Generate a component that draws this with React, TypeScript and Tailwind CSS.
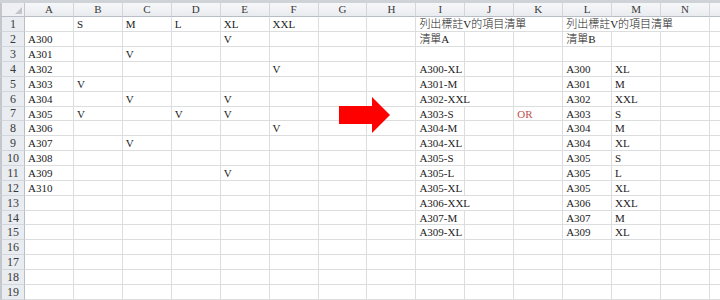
const COLS = ['A', 'B', 'C', 'D', 'E', 'F', 'G', 'H', 'I', 'J', 'K', 'L', 'M', 'N']
const COL_W = 48.93
const TITLE = '列出標註V的項目清單'

type Row = Record<string, string>

const rows: Row[] = [
  { B: 'S', C: 'M', D: 'L', E: 'XL', F: 'XXL', I: TITLE, L: TITLE },
  { A: 'A300', E: 'V', I: '清單A', L: '清單B' },
  { A: 'A301', C: 'V' },
  { A: 'A302', F: 'V', I: 'A300-XL', L: 'A300', M: 'XL' },
  { A: 'A303', B: 'V', I: 'A301-M', L: 'A301', M: 'M' },
  { A: 'A304', C: 'V', E: 'V', I: 'A302-XXL', L: 'A302', M: 'XXL' },
  { A: 'A305', B: 'V', D: 'V', E: 'V', I: 'A303-S', K: 'OR', L: 'A303', M: 'S' },
  { A: 'A306', F: 'V', I: 'A304-M', L: 'A304', M: 'M' },
  { A: 'A307', C: 'V', I: 'A304-XL', L: 'A304', M: 'XL' },
  { A: 'A308', I: 'A305-S', L: 'A305', M: 'S' },
  { A: 'A309', E: 'V', I: 'A305-L', L: 'A305', M: 'L' },
  { A: 'A310', I: 'A305-XL', L: 'A305', M: 'XL' },
  { I: 'A306-XXL', L: 'A306', M: 'XXL' },
  { I: 'A307-M', L: 'A307', M: 'M' },
  { I: 'A309-XL', L: 'A309', M: 'XL' },
  {},
  {},
  {},
  {},
]

const spanClass: Record<number, string> = { 1: '', 2: 'col-span-2', 3: 'col-span-3', 4: 'col-span-4' }

// rough width of the text, to let long values spill over empty neighbours like Excel does
function textWidth(s: string) {
  let w = 0
  for (const ch of s) w += /[\u3000-\u9fff]/.test(ch) ? 11 : 6
  return w
}

const font = { fontFamily: '"Liberation Serif", "Noto Sans CJK TC", serif' }

function DataRow({ row, n }: { row: Row; n: number }) {
  const cells = []
  let c = 0
  while (c < COLS.length) {
    const text = row[COLS[c]] ?? ''
    let span = 1
    if (text) {
      const w = textWidth(text) + 4
      while (w > span * COL_W && c + span < COLS.length && !row[COLS[c + span]]) span++
    }
    const cjk = /[\u3000-\u9fff]/.test(text)
    cells.push(
      <div
        key={c}
        className={`${spanClass[span]} border-r border-b border-[#dcdddf] bg-white pl-[3px] text-[11px] leading-[15px] whitespace-nowrap overflow-hidden ${
          text === 'OR' ? 'text-[#c0504d]' : 'text-[#222222]'
        } ${cjk ? 'font-light' : ''}`}
      >
        {text}
      </div>
    )
    c += span
  }
  return (
    <>
      <div className="flex items-center justify-center border-l-2 border-r border-b border-l-[#c3c7cc] border-r-[#b9bec6] border-b-[#d3d7dc] bg-[#e9ecf0] text-[12px] text-[#3a3a3a]">
        {n}
      </div>
      {cells}
      <div className="border-b border-[#dcdddf] bg-white" />
    </>
  )
}

export default function App() {
  return (
    <div className="relative w-[720px] h-[300px] overflow-hidden bg-white" style={font}>
      <div className="h-[3px] bg-[#cfd2d6]" />
      <div className="grid grid-cols-[25px_repeat(14,48.93px)_1fr] grid-rows-[14.4px_repeat(19,14.86px)]">
        <div className="relative border-l-2 border-r border-b border-l-[#c3c7cc] border-r-[#c3c7cc] border-b-[#b9bec6] bg-[#eef0f3]">
          <svg className="absolute right-[2px] bottom-[2px]" width="7" height="7" viewBox="0 0 7 7">
            <polygon points="7,0 7,7 0,7" fill="#c2c6cc" />
          </svg>
        </div>
        {COLS.map((col) => (
          <div
            key={col}
            className="flex items-center justify-center border-r border-b border-r-[#d3d6da] border-b-[#b9bec6] bg-gradient-to-b from-[#f6f7f9] to-[#e9ecef] text-[11px] text-[#3a3a3a]"
          >
            {col}
          </div>
        ))}
        <div className="border-b border-[#b9bec6] bg-gradient-to-b from-[#f6f7f9] to-[#e9ecef]" />
        {rows.map((row, i) => (
          <DataRow key={i} row={row} n={i + 1} />
        ))}
      </div>

      {/* red arrow pointing at the lists */}
      <svg className="absolute left-[339px] top-[97px]" width="52" height="37" viewBox="0 0 52 37">
        <polygon points="0,9 33,9 33,0 51,18 33,36 33,27 0,27" fill="#fe0000" />
      </svg>
    </div>
  )
}
